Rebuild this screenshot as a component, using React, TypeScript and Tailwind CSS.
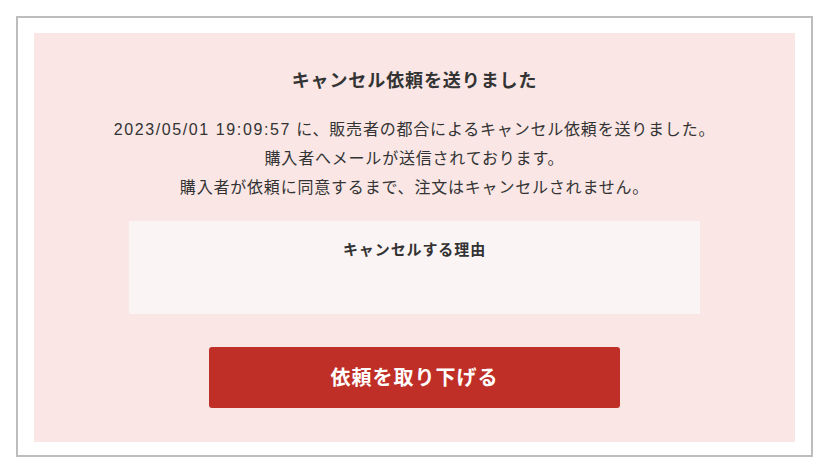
const font = { fontFamily: '"Liberation Sans", "Noto Sans CJK JP", sans-serif' };

export default function App() {
  return (
    <div className="w-[828px] h-[470px] bg-white pt-4 pl-4" style={font}>
      <div className="w-[797px] border-2 border-[#bdbdbd] px-4 pt-[15px] pb-[13px]">
        <div className="bg-[#f9e6e5] pt-[35px] pb-[34px] flex flex-col items-center text-[#333333]">
          <h2 className="text-[18px] leading-[26px] font-bold tracking-[0.05em]">キャンセル依頼を送りました</h2>

          <div className="mt-[21px] text-center text-[16px] leading-[29px] tracking-[0.05em]">
            <p>
              <span className="tracking-[0.1em]">2023/05/01 19:09:57</span> に、販売者の都合によるキャンセル依頼を送りました。
            </p>
            <p>購入者へメールが送信されております。</p>
            <p>購入者が依頼に同意するまで、注文はキャンセルされません。</p>
          </div>

          <div className="mt-[19px] w-[571px] h-[93px] bg-[#fbf4f4] pt-[17px] text-center">
            <h3 className="text-[15px] leading-[24px] font-bold tracking-[0.06em]">キャンセルする理由</h3>
          </div>

          <button className="mt-[33px] w-[411px] h-[61px] rounded-[3px] bg-[#c02f27] text-white text-[20px] font-bold tracking-[0.05em]">
            依頼を取り下げる
          </button>
        </div>
      </div>
    </div>
  );
}
